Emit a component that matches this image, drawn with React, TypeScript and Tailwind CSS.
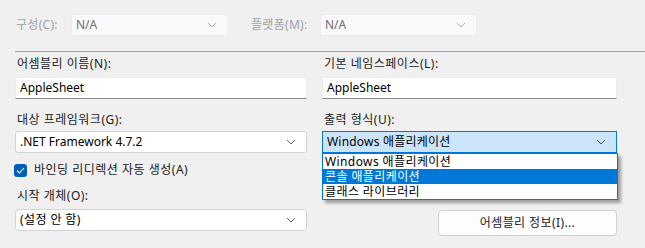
import React from "react";

const FONT = "font-['Segoe_UI','Noto_Sans','Noto_Sans_CJK_KR',sans-serif]";

function Chevron({ color = "#7a7a7a" }: { color?: string }) {
  return (
    <svg width="10" height="6" viewBox="0 0 10 6" className="shrink-0">
      <path d="M1 1 L5 5 L9 1" fill="none" stroke={color} strokeWidth="1" />
    </svg>
  );
}

function Select({
  value,
  className = "",
  disabled = false,
}: {
  value: string;
  className?: string;
  disabled?: boolean;
}) {
  return (
    <div
      className={`flex h-[22px] items-center justify-between rounded-[3px] border pl-[4px] pr-[10px] ${
        disabled ? "border-[#ececec] bg-[#f9f9f9] text-[#6e6e6e]" : "border-[#d4d4d4] bg-white text-black"
      } ${className}`}
    >
      <span className="truncate">{value}</span>
      <Chevron color={disabled ? "#b0b0b0" : "#6a6a6a"} />
    </div>
  );
}

function TextInput({ value }: { value: string }) {
  return (
    <div className="flex h-[22px] items-center border border-[#ececec] border-b-[#8a8a8a] bg-white pl-[4px] text-black">
      {value}
    </div>
  );
}

function Label({ children, className = "" }: { children: React.ReactNode; className?: string }) {
  return (
    <div className={`h-[16px] pl-[2px] leading-[16px] tracking-[0.5px] text-[#1b1b1b] ${className}`}>{children}</div>
  );
}

export default function App() {
  const options = ["Windows 애플리케이션", "콘솔 애플리케이션", "클래스 라이브러리"];
  return (
    <div className={`h-[248px] w-[645px] overflow-hidden bg-[#f0f0f0] text-[12px] ${FONT}`}>
      {/* disabled configuration row */}
      <div className="flex items-center pt-[14px]">
        <span className="ml-[16px] w-[55px] tracking-[0.3px] text-[#a2a2a2]">구성(C):</span>
        <Select value="N/A" disabled className="w-[157px]" />
        <span className="ml-[23px] w-[69px] tracking-[0.3px] text-[#a2a2a2]">플랫폼(M):</span>
        <Select value="N/A" disabled className="w-[157px]" />
      </div>

      <div className="ml-[15px] mt-[15px] h-px bg-[#a3a3a3]" />

      <div className="grid grid-cols-[292px_295px] gap-x-[15px] px-[15px]">
        {/* left column */}
        <div className="flex flex-col">
          <Label className="mt-[4px]">어셈블리 이름(N):</Label>
          <div className="mt-[5px]">
            <TextInput value="AppleSheet" />
          </div>
          <Label className="mt-[13px]">대상 프레임워크(G):</Label>
          <Select value=".NET Framework 4.7.2" className="mt-[3px]" />
          <div className="mt-[8px] flex h-[18px] items-center">
            <div className="ml-[-1px] flex h-[13px] w-[13px] items-center justify-center rounded-[3px] bg-[#005fb8]">
              <svg width="9" height="7" viewBox="0 0 9 7">
                <path d="M1 3.6 L3.4 6 L8 1" fill="none" stroke="white" strokeWidth="1.1" />
              </svg>
            </div>
            <span className="ml-[7px] tracking-[0.5px] text-[#1b1b1b]">바인딩 리디렉션 자동 생성(A)</span>
          </div>
          <Label className="mt-[9px]">시작 개체(O):</Label>
          <Select value="(설정 안 함)" className="mt-[5px] tracking-[0.4px]" />
        </div>

        {/* right column */}
        <div className="flex flex-col">
          <Label className="mt-[4px]">기본 네임스페이스(L):</Label>
          <div className="mt-[5px]">
            <TextInput value="AppleSheet" />
          </div>
          <Label className="mt-[13px]">출력 형식(U):</Label>
          <div className="relative mt-[3px]">
            <div className="flex h-[22px] items-center justify-between border border-[#0078d7] bg-[#cce4f7] pl-[4px] pr-[10px] tracking-[0.2px] text-black">
              <span>Windows 애플리케이션</span>
              <Chevron color="#505050" />
            </div>
            <div className="absolute left-0 top-[22px] z-10 w-[296px] border border-[#0078d7] bg-white shadow-[3px_3px_3px_rgba(0,0,0,0.35)]">
              {options.map((o, i) => (
                <div
                  key={o}
                  className={`h-[15px] overflow-hidden pl-[2px] leading-[15px] tracking-[0.4px] ${
                    i === 1 ? "bg-[#0078d7] text-white" : "text-black"
                  }`}
                >
                  {o}
                </div>
              ))}
            </div>
          </div>
          <div className="mt-[57px] flex justify-end">
            <button className="h-[26px] w-[179px] rounded-[4px] border border-[#d0d0d0] bg-[#fdfdfd] tracking-[0.4px] text-[#1b1b1b]">
              어셈블리 정보(I)...
            </button>
          </div>
        </div>
      </div>
    </div>
  );
}
